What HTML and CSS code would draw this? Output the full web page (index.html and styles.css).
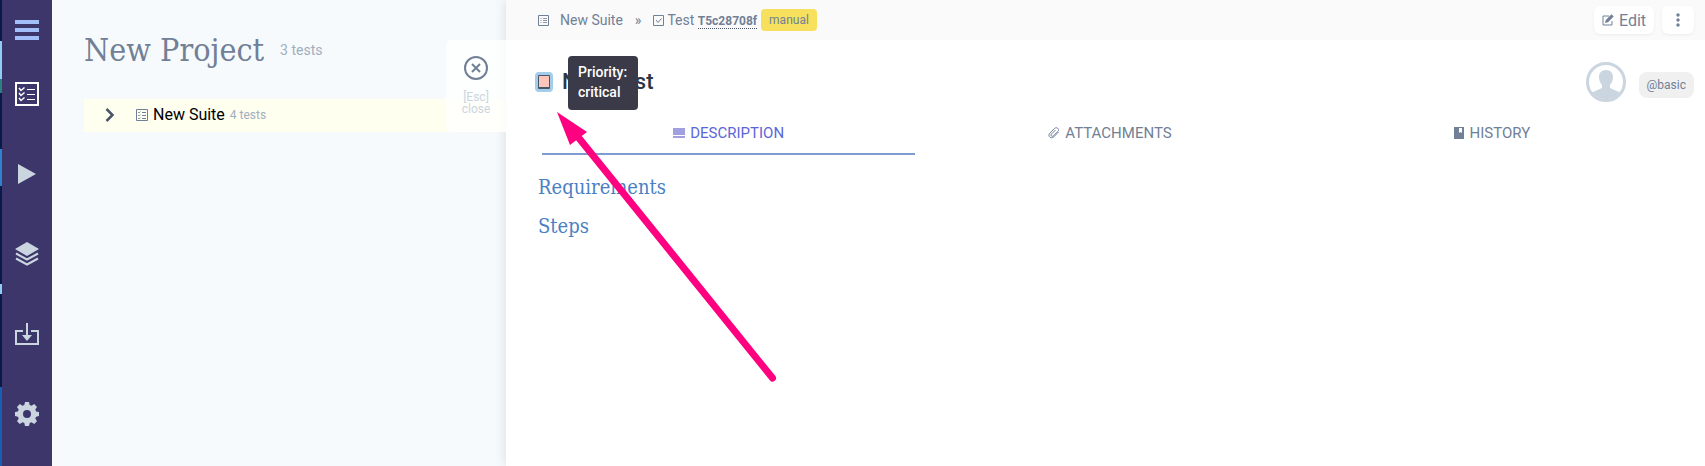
FILE: index.html
```html
<!DOCTYPE html>
<html lang="en">
<head>
<meta charset="utf-8">
<title>New Project</title>
<link rel="stylesheet" href="styles.css">
</head>
<body>
<div class="app">
  <nav class="sidebar" aria-label="Main">
    <button class="nav-item nav-menu" aria-label="Menu"><svg viewBox="0 0 24 24"><path d="M0 2h24v4H0zM0 10h24v4H0zM0 18h24v4H0z"/></svg></button>
    <a class="nav-item nav-active" href="#" aria-label="Tests"><svg viewBox="0 0 24 24" fill="none" stroke="currentColor"><path d="M1 1h22v22H1z" stroke-width="2"/><path d="M12 7.500h8M12 12.500h8M12 17.500h8" stroke-width="1"/><path d="M4 6l2 2.500 3.500-3M4 11l2 2.500 3.500-3M4 16l2 2.500 3.500-3" stroke-width="1.500"/></svg></a>
    <a class="nav-item" href="#" aria-label="Runs"><svg viewBox="0 0 24 24"><path d="M3 2l18 10L3 22z"/></svg></a>
    <a class="nav-item" href="#" aria-label="Plans"><svg viewBox="0 0 24 24"><path d="M12 0l12 7-12 7L0 7z"/><path d="M1 11.500l11 6 11-6M1 16.500l11 6 11-6" fill="none" stroke="currentColor" stroke-width="2"/></svg></a>
    <a class="nav-item" href="#" aria-label="Import"><svg viewBox="0 0 24 24"><path d="M8 9H1v13h22V9h-7M12 1v12" fill="none" stroke="currentColor" stroke-width="2"/><path d="M7 13h10l-5 6z"/></svg></a>
    <a class="nav-item" href="#" aria-label="Settings"><svg viewBox="0 0 24 24"><path fill-rule="evenodd" d="M10 0h4l.7 3 1.800.8 2.700-1.700 2.800 2.800-1.700 2.700.8 1.800 2.900.6v4l-2.900.7-.8 1.800 1.700 2.700-2.800 2.700-2.700-1.700-1.800.8L14 24h-4l-.7-3-1.800-.8-2.700 1.700L2 19.200l1.700-2.700-.8-1.800L0 14v-4l2.900-.6.8-1.800L2 4.900l2.800-2.800 2.700 1.700L9.300 3zM12 8a4 4 0 1 0 0 8 4 4 0 0 0 0-8z"/></svg></a>
  </nav>

  <main class="project">
    <header class="project-head"><h1>New Project</h1><span class="project-count">3 tests</span></header>
    <div class="suite">
      <button class="suite-toggle" aria-label="Expand"><svg viewBox="0 0 10 14"><path d="M1.500 1l6 6-6 6" fill="none" stroke="currentColor" stroke-width="2.500"/></svg></button>
      <svg class="icon-sm" viewBox="0 0 12 12" fill="none" stroke="currentColor"><path d="M.5.500h11v11H.500z"/><path d="M6 3.500h4M6 6.500h4M6 9.500h4"/><path d="M2 3l1 1 1.500-1.500M2 6l1 1 1.500-1.500M2 9l1 1 1.500-1.500" stroke-width=".8"/></svg>
      <a class="suite-name" href="#">New Suite</a>
      <span class="suite-count">4 tests</span>
    </div>
  </main>

  <section class="detail">
    <button class="close">
      <svg viewBox="0 0 24 24" fill="none" stroke="currentColor" stroke-width="2"><circle cx="12" cy="12" r="11"/><path d="M8 8l8 8M16 8l-8 8"/></svg>
      <span>[Esc]<br>close</span>
    </button>
    <header class="topbar">
      <div class="crumbs">
        <svg class="icon-xs" viewBox="0 0 11 11" fill="none" stroke="currentColor"><path d="M.5.500h10v10H.500z"/><path d="M5 3.500h4M5 5.500h4M5 7.500h4M2.500 3.500h1M2.500 5.500h1M2.500 7.500h1" stroke-width=".8"/></svg>
        <a class="crumb-suite" href="#">New Suite</a>
        <span class="crumb-sep">»</span>
        <svg class="icon-xs" viewBox="0 0 11 11" fill="none" stroke="currentColor"><path d="M.5.500h10v10H.500z"/><path d="M3 5l2 2.500L8.500 3.500"/></svg>
        <span class="crumb-test">Test <a class="test-id" href="#">T5c28708f</a></span>
        <span class="tag-manual">manual</span>
      </div>
      <div class="actions">
        <button class="action edit"><svg viewBox="0 0 12 12"><path d="M7 2H1v9h9V7" fill="none" stroke="currentColor"/><path d="M3 9l.8-3L9.500.300l2.200 2.200L6 8.200z"/></svg>Edit</button>
        <button class="action more" aria-label="More"><svg viewBox="0 0 4 14"><circle cx="2" cy="2" r="1.700"/><circle cx="2" cy="7" r="1.700"/><circle cx="2" cy="12" r="1.700"/></svg></button>
      </div>
    </header>
    <div class="title-row">
      <div class="title-wrap">
        <button class="priority" aria-label="Priority" aria-describedby="tip"><span></span></button>
        <h2>New Test</h2>
        <div class="tooltip" id="tip" role="tooltip">Priority:<br>critical</div>
      </div>
      <div class="owner">
        <svg class="avatar" viewBox="0 0 40 40"><circle cx="20" cy="20" r="18.500" fill="none" stroke="currentColor" stroke-width="3"/><path d="M20 8c4.500 0 7 3 7 7 0 3-1 6-3 8v3l10 4.500A18 18 0 0 1 6 30.500L16 26v-3c-2-2-3-5-3-8 0-4 2.500-7 7-7z"/></svg>
        <span class="tag-basic">@basic</span>
      </div>
    </div>
    <div class="tabs" role="tablist">
      <button class="tab tab-active" role="tab" aria-selected="true"><svg viewBox="0 0 12 10"><path d="M0 0h12v7H0zM0 8h12v2H0z"/></svg>DESCRIPTION</button>
      <button class="tab" role="tab"><svg viewBox="0 0 12 12" fill="none" stroke="currentColor"><path d="M10.500 5L5.800 9.800C3 12.500-.8 9 1.800 6.200L6.500 1.500c2.200-2.200 5.500.8 3.300 3L5.500 8.800C4 10.200 2 8.500 3.500 7L7.500 3"/></svg>ATTACHMENTS</button>
      <button class="tab" role="tab"><svg viewBox="0 0 12 12"><path fill-rule="evenodd" d="M1 0h10v12H1zM6 1v5l1.500-1L9 6V1z"/></svg>HISTORY</button>
    </div>
    <article class="body"><h3>Requirements</h3><h3>Steps</h3></article>
    <svg class="pointer" viewBox="0 0 222 272"><path d="M17 20L215.500 266" fill="none" stroke="currentColor" stroke-width="7" stroke-linecap="round"/><path d="M0 0l30 20-17 13z"/></svg>
  </section>
</div>
</body>
</html>
```
FILE: styles.css
```css
* { box-sizing: border-box; }
body { margin: 0; font-family: Roboto, "Liberation Sans", sans-serif; font-size: 14px; color: #718096; background: #f7fafc; }
button { margin: 0; padding: 0; border: 0; background: none; font: inherit; color: inherit; cursor: pointer; }
a { color: inherit; text-decoration: none; }
svg { display: block; flex: none; fill: currentColor; }
svg[fill="none"] { fill: none; }
h1, h2, h3 { margin: 0; }
.app { display: flex; min-height: 100vh; }
.sidebar { width: 52px; flex: none; display: flex; flex-direction: column; align-items: center; gap: 56px; padding-top: 82px; background: #3c366b; border-left: 2px solid; border-image: linear-gradient(#071a48 9%, #90cdf4 9% 17%, #2c8080 17% 20%, #071a48 20% 32%, #3182ce 32% 40%, #071a48 40% 61%, #90cdf4 61% 63%, #071a48 63% 83%, #1a5fb4 83%) 1; color: #cbd5e0; }
.nav-item svg { width: 24px; height: 24px; }
.nav-menu { margin: -64px 0 -16px; color: #a3bffa; }
.nav-active { color: #fff; }
.project { width: 454px; flex: none; padding: 28px 0 0 32px; }
.project-head { display: flex; align-items: center; gap: 16px; height: 44px; }
h1 { font: 400 32px/44px "DejaVu Serif Condensed", "DejaVu Serif", serif; white-space: nowrap; }
.project-count { color: #a0aec0; }
.suite { display: flex; align-items: center; height: 33px; margin-top: 27px; padding: 0 0 2px 21px; background: #fffff0; }
.suite-toggle { margin-right: 21px; color: #4a5568; }
.suite-toggle svg { width: 10px; height: 14px; }
.icon-sm { width: 12px; height: 12px; }
.suite-name { margin: 0 5px; font-size: 16px; color: #000; }
.suite-count { font-size: 12px; color: #a0aec0; }
.detail { position: relative; flex: 1; min-width: 0; background: #fff; box-shadow: 0 0 12px rgba(0, 0, 0, .12); }
.close { position: absolute; top: 40px; right: 100%; width: 60px; height: 92px; padding-top: 16px; border-radius: 6px 0 0 6px; background: rgba(255, 255, 255, .75); display: flex; flex-direction: column; align-items: center; gap: 11px; font-size: 12px; line-height: 12px; }
.close svg { width: 24px; height: 24px; }
.close span { color: #cbd5e0; }
.topbar { display: flex; justify-content: space-between; align-items: center; height: 40px; padding: 0 11px 0 32px; background: #fafafa; }
.crumbs { display: flex; align-items: center; }
.icon-xs { width: 11px; height: 11px; }
.crumb-suite { margin: 0 12px 0 11px; }
.crumb-sep { margin-right: 12px; }
.crumb-test { margin: 0 4px 0 3px; }
.test-id { font-weight: 700; font-size: 12px; border-bottom: 1px dotted #4a5568; }
.tag-manual { padding: 0 8px; border-radius: 4px; background: #f6e05e; line-height: 22px; font-size: 12px; }
.actions { display: flex; gap: 8px; }
.action { height: 28px; border-radius: 6px; background: #fff; box-shadow: 0 1px 3px rgba(0, 0, 0, .06); display: flex; align-items: center; justify-content: center; gap: 5px; }
.edit { width: 60px; font-size: 16px; }
.edit svg { width: 12px; height: 12px; }
.more { width: 32px; }
.more svg { width: 4px; height: 14px; }
.title-row { display: flex; justify-content: space-between; align-items: center; height: 83px; padding: 0 11px 0 29px; }
.title-wrap { position: relative; display: flex; align-items: center; gap: 9px; }
h2 { font: 500 22px/28px Roboto, sans-serif; color: #2d3748; }
.priority { width: 18px; height: 20px; padding: 3px; border-radius: 4px; background: #a3cdea; }
.priority span { display: block; height: 14px; border: 1px solid #4a5568; border-bottom-width: 2px; border-radius: 1px; background: #fec5bb; }
.tooltip { position: absolute; left: 33px; top: -12px; width: 70px; padding: 6px 10px 8px; border-radius: 4px; background: #3a3a48; color: #fff; font-size: 14px; font-weight: 500; line-height: 20px; white-space: nowrap; }
.owner { display: flex; align-items: center; gap: 13px; }
.avatar { width: 40px; height: 40px; color: #cbd5e0; }
.tag-basic { margin-top: 6px; padding: 0 8px; border-radius: 8px; background: #f0f0f0; font-size: 12px; line-height: 26px; }
.tabs { display: grid; grid-template-columns: repeat(3, 1fr); padding: 0 23px 0 32px; }
.tab { display: flex; justify-content: center; gap: 5px; height: 32px; margin: 0 4px; align-items: flex-start; line-height: 20px; font-size: 15px; border-bottom: 2px solid transparent; }
.tab svg { width: 12px; height: 12px; margin-top: 4px; }
.tab-active { color: #5a67d8; border-color: #7f9cd0; }
.tab-active svg { color: #a0a0e0; }
.body { padding: 18px 32px; color: #4a7fc4; }
h3 { margin-bottom: 11px; font: 400 20px/28px "DejaVu Serif Condensed", "DejaVu Serif", serif; }
.pointer { position: absolute; left: 51px; top: 112px; width: 222px; height: 272px; color: #ff0080; pointer-events: none; }
```
